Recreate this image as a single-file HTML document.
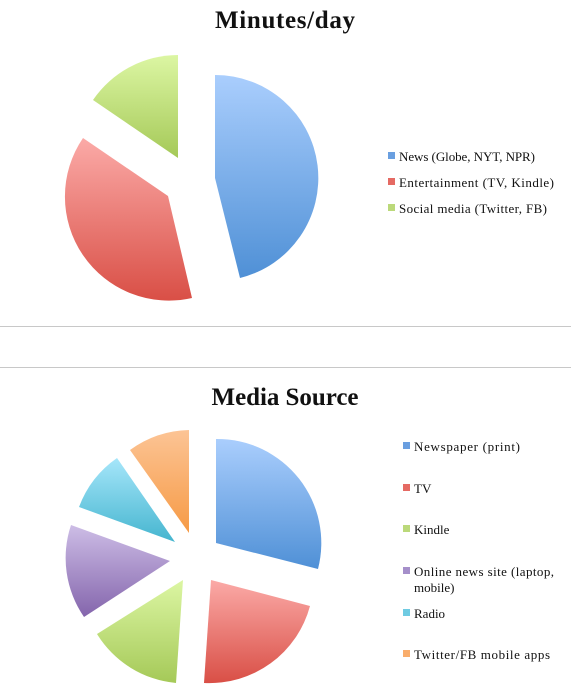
<!DOCTYPE html>
<html><head><meta charset="utf-8"><style>
html,body{margin:0;padding:0;background:#fff;}
svg{display:block;}
text{font-family:"Liberation Serif",serif;fill:#111;}
.t{font-size:25px;font-weight:bold;}
.l{font-size:13px;}
</style></head><body>
<svg width="571" height="699" viewBox="0 0 571 699">
<defs>
<linearGradient id="b" x1="0" y1="0" x2="0" y2="1"><stop offset="0" stop-color="#aacefd"/><stop offset="1" stop-color="#4f90d6"/></linearGradient>
<linearGradient id="r" x1="0" y1="0" x2="0" y2="1"><stop offset="0" stop-color="#fbaaa7"/><stop offset="1" stop-color="#d94f46"/></linearGradient>
<linearGradient id="g" x1="0" y1="0" x2="0" y2="1"><stop offset="0" stop-color="#dcf6a3"/><stop offset="1" stop-color="#a5c958"/></linearGradient>
<linearGradient id="p" x1="0" y1="0" x2="0" y2="1"><stop offset="0" stop-color="#cdbde6"/><stop offset="1" stop-color="#8465ac"/></linearGradient>
<linearGradient id="c" x1="0" y1="0" x2="0" y2="1"><stop offset="0" stop-color="#a6e6fa"/><stop offset="1" stop-color="#45b5cf"/></linearGradient>
<linearGradient id="o" x1="0" y1="0" x2="0" y2="1"><stop offset="0" stop-color="#fcc495"/><stop offset="1" stop-color="#f69a45"/></linearGradient>
</defs>
<text class="t" x="285" y="28" text-anchor="middle" textLength="140">Minutes/day</text>
<path d="M215,178 L215,75 A103,103 0 0 1 240,278 Z" fill="url(#b)"/>
<path d="M168,196 L192,298 A104,104 0 0 1 83,138 Z" fill="url(#r)"/>
<path d="M178,158 L93,100 A103,103 0 0 1 178,55 Z" fill="url(#g)"/>
<rect x="388" y="152" width="7" height="7" fill="#6a9fe0"/>
<text class="l" x="399" y="161" textLength="136">News (Globe, NYT, NPR)</text>
<rect x="388" y="178" width="7" height="7" fill="#e56a63"/>
<text class="l" x="399" y="187" textLength="155">Entertainment (TV, Kindle)</text>
<rect x="388" y="204" width="7" height="7" fill="#bbd97a"/>
<text class="l" x="399" y="213" textLength="148">Social media (Twitter, FB)</text>
<rect x="0" y="326" width="571" height="1" fill="#c8c8c8"/>
<rect x="0" y="367" width="571" height="1" fill="#c8c8c8"/>
<text class="t" x="285" y="405" text-anchor="middle" textLength="147">Media Source</text>
<path d="M216,543 L216,439 A104,104 0 0 1 318,569 Z" fill="url(#b)"/>
<path d="M211,580 L310,606 A104,104 0 0 1 204,683 Z" fill="url(#r)"/>
<path d="M183,580 L176,683 A104,104 0 0 1 97,634 Z" fill="url(#g)"/>
<path d="M170,561 L84,617 A104,104 0 0 1 71,525 Z" fill="url(#p)"/>
<path d="M175,542 L79,507 A104,104 0 0 1 117,458 Z" fill="url(#c)"/>
<path d="M189,533 L130,450 A104,104 0 0 1 189,430 Z" fill="url(#o)"/>
<rect x="403" y="442" width="7" height="7" fill="#6a9fe0"/>
<text class="l" x="414" y="451" textLength="106">Newspaper (print)</text>
<rect x="403" y="484" width="7" height="7" fill="#e56a63"/>
<text class="l" x="414" y="493">TV</text>
<rect x="403" y="525" width="7" height="7" fill="#bbd97a"/>
<text class="l" x="414" y="534">Kindle</text>
<rect x="403" y="567" width="7" height="7" fill="#a58fca"/>
<text class="l" x="414" y="576" textLength="140">Online news site (laptop,</text>
<text class="l" x="414" y="592">mobile)</text>
<rect x="403" y="609" width="7" height="7" fill="#6fcbe2"/>
<text class="l" x="414" y="618">Radio</text>
<rect x="403" y="650" width="7" height="7" fill="#f9ad6c"/>
<text class="l" x="414" y="659" textLength="136">Twitter/FB mobile apps</text>
</svg>
</body></html>
